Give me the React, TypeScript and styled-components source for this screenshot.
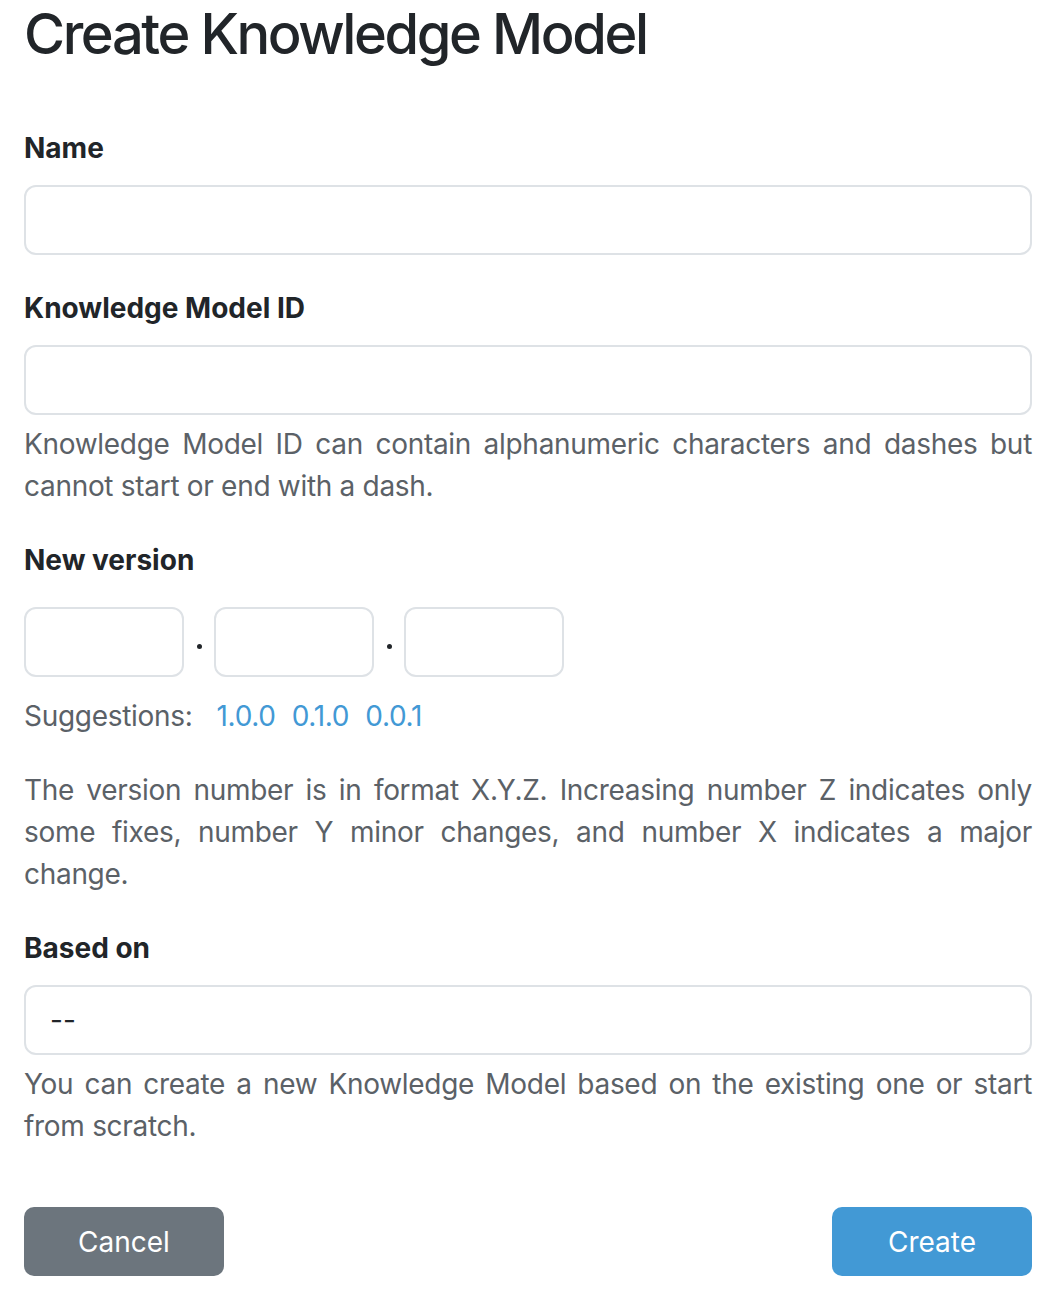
import React from "react";
import styled, { createGlobalStyle } from "styled-components";

const GlobalStyle = createGlobalStyle`
  html, body { margin: 0; padding: 0; background: #ffffff; }
  body {
    font-family: Inter, "Noto Sans", "Liberation Sans", sans-serif;
    color: #212529;
    -webkit-font-smoothing: antialiased;
  }
  * { box-sizing: border-box; }
`;

const Page = styled.div`
  width: 1056px;
  padding: 0 24px 21px;
`;

const Title = styled.h1`
  margin: 0;
  font-size: 56px;
  font-weight: 500;
  line-height: 68px;
  letter-spacing: -2.4px;
  color: #212529;
`;

const Form = styled.form`
  display: flex;
  flex-direction: column;
  margin-top: 59px;
`;

const Group = styled.div<{ $gapTop?: number }>`
  display: flex;
  flex-direction: column;
  margin-top: ${(p) => p.$gapTop ?? 0}px;
`;

const Label = styled.label`
  font-size: 28px;
  font-weight: 700;
  line-height: 42px;
  color: #212529;
  margin-bottom: 16px;
`;

const Input = styled.input`
  width: 100%;
  height: 70px;
  border: 2px solid #dee2e6;
  border-radius: 12px;
  background: #fff;
  padding: 0 24px;
  font-family: inherit;
  font-size: 28px;
  color: #212529;
  outline: none;
`;

const Select = styled.div`
  width: 100%;
  height: 70px;
  border: 2px solid #dee2e6;
  border-radius: 12px;
  background: #fff;
  padding: 0 24px;
  display: flex;
  align-items: center;
  font-size: 28px;
  color: #212529;
`;

const Help = styled.p`
  margin: 8px 0 0;
  font-size: 28px;
  line-height: 42px;
  letter-spacing: -0.3px;
  color: #5b6167;
  text-align: justify;
`;

const Paragraph = styled.p`
  margin: 32px 0 0;
  font-size: 28px;
  line-height: 42px;
  letter-spacing: -0.3px;
  color: #5b6167;
  text-align: justify;
`;

const VersionRow = styled.div`
  display: flex;
  align-items: center;
  margin-top: 10px;
`;

const VersionInput = styled(Input)`
  width: 160px;
`;

const Dot = styled.span`
  width: 30px;
  display: flex;
  justify-content: center;
  align-items: center;
  align-self: stretch;
  padding-top: 8px;
  &::before {
    content: "";
    width: 5px;
    height: 5px;
    border-radius: 50%;
    background: #212529;
  }
`;

const Suggestions = styled.div`
  display: flex;
  align-items: baseline;
  margin-top: 18px;
  font-size: 28px;
  line-height: 42px;
  letter-spacing: -0.3px;
  color: #5b6167;
`;

const SuggestionLabel = styled.span`
  margin-right: 24px;
`;

const SuggestionLink = styled.a`
  color: #4299d5;
  text-decoration: none;
  margin-right: 16px;
  cursor: pointer;
`;

const Actions = styled.div`
  display: flex;
  justify-content: space-between;
  margin-top: 60px;
`;

const Button = styled.button<{ $variant: "secondary" | "primary" }>`
  width: 200px;
  height: 69px;
  border: none;
  border-radius: 10px;
  font-family: inherit;
  font-size: 28px;
  font-weight: 400;
  color: #ffffff;
  background: ${(p) => (p.$variant === "primary" ? "#4299d5" : "#6c757d")};
  cursor: pointer;
`;

export default function App() {
  return (
    <>
      <GlobalStyle />
      <Page>
        <Title>Create Knowledge Model</Title>
        <Form onSubmit={(e) => e.preventDefault()}>
          <Group>
            <Label>Name</Label>
            <Input type="text" />
          </Group>
          <Group $gapTop={32}>
            <Label>Knowledge Model ID</Label>
            <Input type="text" />
            <Help>
              Knowledge Model ID can contain alphanumeric characters and dashes but
              cannot start or end with a dash.
            </Help>
          </Group>
          <Group $gapTop={32}>
            <Label>New version</Label>
            <VersionRow>
              <VersionInput type="text" />
              <Dot />
              <VersionInput type="text" />
              <Dot />
              <VersionInput type="text" />
            </VersionRow>
            <Suggestions>
              <SuggestionLabel>Suggestions:</SuggestionLabel>
              <SuggestionLink>1.0.0</SuggestionLink>
              <SuggestionLink>0.1.0</SuggestionLink>
              <SuggestionLink>0.0.1</SuggestionLink>
            </Suggestions>
            <Paragraph>
              The version number is in format X.Y.Z. Increasing number Z indicates only
              some fixes, number Y minor changes, and number X indicates a major change.
            </Paragraph>
          </Group>
          <Group $gapTop={32}>
            <Label>Based on</Label>
            <Select>--</Select>
            <Help>
              You can create a new Knowledge Model based on the existing one or start
              from scratch.
            </Help>
          </Group>
          <Actions>
            <Button type="button" $variant="secondary">Cancel</Button>
            <Button type="button" $variant="primary">Create</Button>
          </Actions>
        </Form>
      </Page>
    </>
  );
}
